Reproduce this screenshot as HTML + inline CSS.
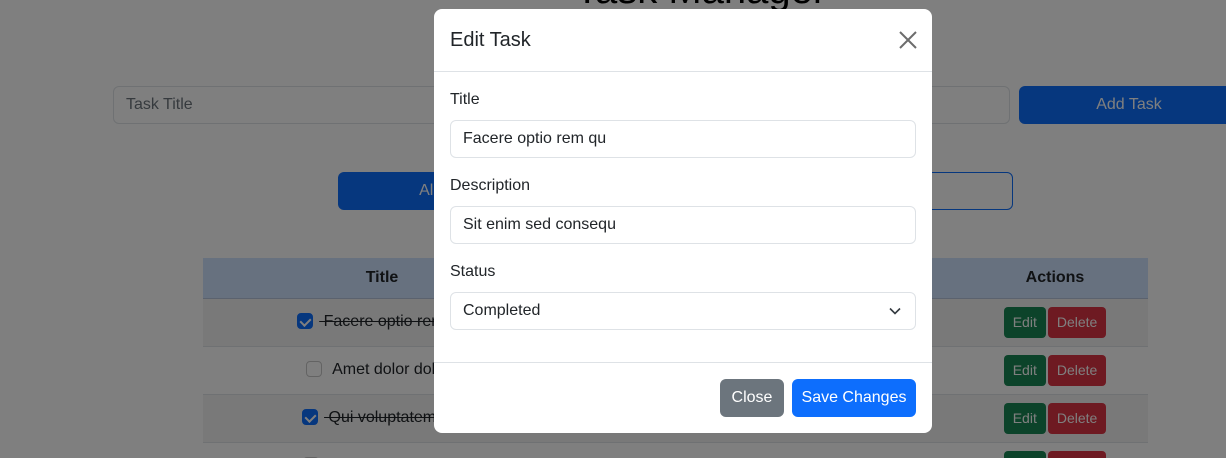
<!DOCTYPE html>
<html><head><meta charset="utf-8"><style>
*{box-sizing:border-box;margin:0;padding:0}
html,body{width:1226px;height:458px;overflow:hidden}
body{background:#fff;font-family:"Liberation Sans",sans-serif;color:#212529;position:relative;font-size:16px}
.abs{position:absolute}
h1{position:absolute;left:575px;top:-32px;font-size:40px;font-weight:500;color:#000}
.inp{border:1px solid #dee2e6;border-radius:6px;background:#fff;padding:0 12px;display:flex;align-items:center;color:#212529;font-size:16px}
.btn{border-radius:6px;display:flex;align-items:center;justify-content:center;color:#fff;font-size:16px}
table{position:absolute;left:203px;top:258px;width:945px;border-collapse:collapse}
td,th{height:48px;border-bottom:1px solid #dee2e6;text-align:center}
th{background:#cfe2ff;height:40px;font-weight:700;border-bottom:1px solid #b6c5dd}
tr.s td{background:#f2f2f2}
.cb{display:inline-block;width:16px;height:16px;border-radius:4px;vertical-align:-3px;margin-right:6px;border:1px solid #c7c7c7;background:#fff}
.cb.on{background:#0d6efd;border-color:#0d6efd;position:relative}
.cb.on:after{content:"";position:absolute;left:4px;top:2px;width:5px;height:8px;border:solid #fff;border-width:0 2px 2px 0;transform:rotate(45deg)}
.sm{display:inline-block;font-size:14px;color:#fff;height:31px;line-height:31px;padding:0 9px;border-radius:4px;margin:0 1px}
.ov{position:absolute;left:0;top:0;width:1226px;height:458px;background:rgba(0,0,0,.5)}
.modal{position:absolute;left:434px;top:9px;width:498px;height:424px;background:#fff;border-radius:8px}
.lbl{position:absolute;left:16px;font-size:16px;color:#212529}
.mi{position:absolute;left:16px;width:466px;height:38px}
</style></head><body>
<h1>Task Manager</h1>
<div class="abs inp" style="left:113px;top:86px;width:897px;height:38px;color:#6c757d">Task Title</div>
<div class="abs btn" style="left:1019px;top:86px;width:220px;height:38px;background:#0d6efd">Add Task</div>
<div class="abs btn" style="left:338px;top:172px;width:225px;height:38px;background:#0d6efd;border-radius:6px 0 0 6px">All Tasks</div>
<div class="abs btn" style="left:563px;top:172px;width:225px;height:38px;border:1px solid #0d6efd;border-radius:0;color:#0d6efd">Completed</div>
<div class="abs btn" style="left:788px;top:172px;width:225px;height:38px;border:1px solid #0d6efd;border-radius:0 6px 6px 0;color:#0d6efd">Pending</div>
<table>
<tr><th style="width:358px">Title</th><th style="width:401px"></th><th style="padding-left:0">Actions</th></tr>
<tr class="s"><td><span class="cb on"></span><s>&nbsp;Facere optio rem qu</s></td><td></td><td><span class="sm" style="background:#198754">Edit</span><span class="sm" style="background:#dc3545">Delete</span></td></tr>
<tr><td><span class="cb"></span>&nbsp;Amet dolor dolore</td><td></td><td><span class="sm" style="background:#198754">Edit</span><span class="sm" style="background:#dc3545">Delete</span></td></tr>
<tr class="s"><td><span class="cb on"></span><s>&nbsp;Qui voluptatem qui</s></td><td></td><td><span class="sm" style="background:#198754">Edit</span><span class="sm" style="background:#dc3545">Delete</span></td></tr>
<tr><td><span class="cb"></span>&nbsp;Lorem ipsum dolor</td><td></td><td><span class="sm" style="background:#198754">Edit</span><span class="sm" style="background:#dc3545">Delete</span></td></tr>
</table>
<div class="ov"></div>
<div class="modal">
<div class="abs" style="left:16px;top:20px;font-size:20px;font-weight:500">Edit Task</div>
<svg class="abs" style="left:465px;top:22px" width="18" height="18" viewBox="0 0 18 18"><path d="M1 1L17 17M17 1L1 17" stroke="#6c6c6c" stroke-width="2"/></svg>
<div class="abs" style="left:0;top:62px;width:498px;height:1px;background:#dee2e6"></div>
<div class="lbl" style="top:82px">Title</div>
<div class="mi inp" style="top:111px">Facere optio rem qu</div>
<div class="lbl" style="top:168px">Description</div>
<div class="mi inp" style="top:197px">Sit enim sed consequ</div>
<div class="lbl" style="top:254px">Status</div>
<div class="mi inp" style="top:283px">Completed
<svg class="abs" style="right:14px;top:14px" width="12" height="8" viewBox="0 0 12 8"><path d="M1 1.5L6 6.5L11 1.5" stroke="#343a40" stroke-width="1.6" fill="none"/></svg></div>
<div class="abs" style="left:0;top:353px;width:498px;height:1px;background:#dee2e6"></div>
<div class="abs btn" style="left:286px;top:370px;width:64px;height:38px;background:#6c757d">Close</div>
<div class="abs btn" style="left:358px;top:370px;width:124px;height:38px;background:#0d6efd">Save Changes</div>
</div>
</body></html>
